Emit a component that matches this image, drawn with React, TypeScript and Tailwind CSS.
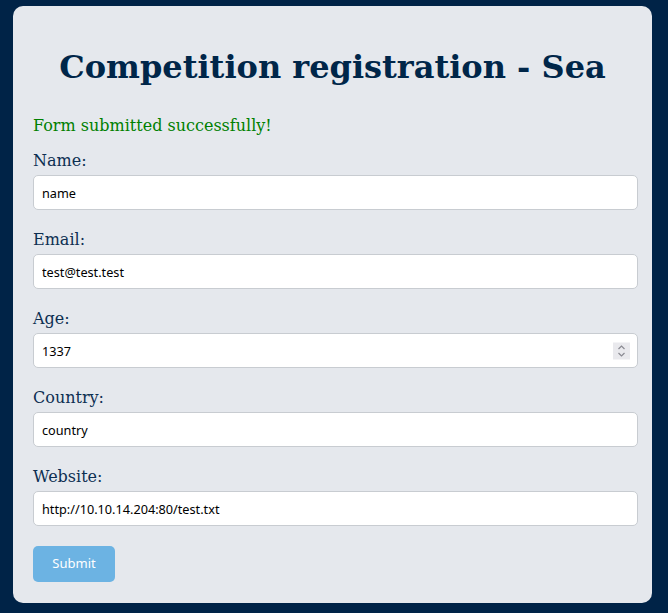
import React from 'react';

const fields = [
  { label: 'Name:', type: 'text', value: 'name' },
  { label: 'Email:', type: 'email', value: 'test@test.test' },
  { label: 'Age:', type: 'number', value: '1337' },
  { label: 'Country:', type: 'text', value: 'country' },
  { label: 'Website:', type: 'text', value: 'http://10.10.14.204:80/test.txt' },
];

function Spinner() {
  return (
    <div className="absolute right-[8px] top-1/2 -translate-y-1/2 w-[17px] h-[17px] bg-[#e9e9ed] flex items-center justify-center pointer-events-none">
      <svg width="9" height="13" viewBox="0 0 9 13" fill="none" stroke="#8a8a92" strokeWidth="1.2">
        <path d="M1.5 4.5 L4.5 1.5 L7.5 4.5" />
        <path d="M1.5 8.5 L4.5 11.5 L7.5 8.5" />
      </svg>
    </div>
  );
}

function App() {
  return (
    <div className="min-h-screen bg-[#002347] pl-[13px] pr-[16px] py-[6px] font-['DejaVu_Serif',serif]">
      <div className="bg-[#e5e8ed] rounded-[10px] px-[20px] pt-[26px] pb-[21px]">
        <h1 className="mt-[16px] mb-[30px] text-center text-[32px] leading-[38px] font-bold text-[#002649]">
          Competition registration - Sea
        </h1>
        <p className="text-[16px] leading-[20px] text-[#008000] mb-[15px]">Form submitted successfully!</p>
        <form onSubmit={(e) => e.preventDefault()}>
          {fields.map((f) => (
            <div key={f.label} className="mb-[20px]">
              <label className="block text-[16px] leading-[20px] text-[#0d2f52] mb-[4px]">{f.label}</label>
              <div className="relative w-[calc(100%+6px)]">
                <input
                  type={f.type === 'number' ? 'text' : f.type}
                  inputMode={f.type === 'number' ? 'numeric' : undefined}
                  defaultValue={f.value}
                  className="block w-full h-[35px] px-[8px] bg-white border border-[#c8ccd1] rounded-[5px] text-[12.7px] text-black font-['Noto_Sans',sans-serif] outline-none"
                />
                {f.type === 'number' && <Spinner />}
              </div>
            </div>
          ))}
          <button
            type="submit"
            className="w-[82px] h-[36px] rounded-[5px] bg-[#6cb3e3] text-white text-[13px] font-['Noto_Sans',sans-serif]"
          >
            Submit
          </button>
        </form>
      </div>
    </div>
  );
}

export default App;
